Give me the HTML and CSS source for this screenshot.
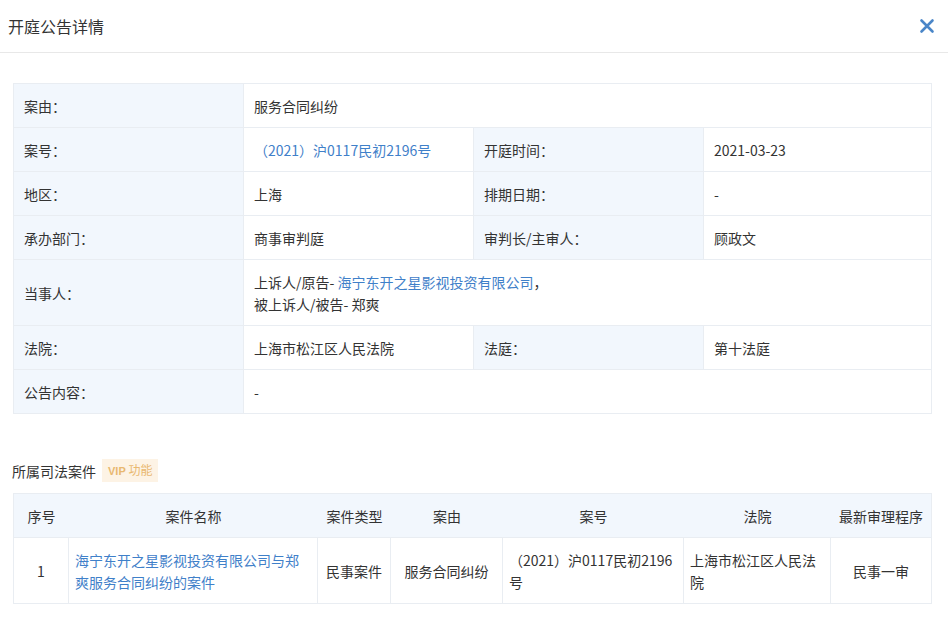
FILE: index.html
```html
<!DOCTYPE html>
<html lang="zh-CN">
<head>
<meta charset="utf-8">
<title>开庭公告详情</title>
<link rel="stylesheet" href="styles.css">
</head>
<body>
<div class="dialog">
  <div class="header">
    <div class="title">开庭公告详情</div>
    <svg class="close" width="16" height="16" viewBox="0 0 16 16"><path d="M2.5 2.5 L13.5 13.5 M13.5 2.5 L2.5 13.5" stroke="#4a86c8" stroke-width="2.6" stroke-linecap="round"/></svg>
  </div>
  <div class="content">
    <div class="detail">
      <div class="cell label">案由：</div>
      <div class="cell value span3">服务合同纠纷</div>

      <div class="cell label">案号：</div>
      <div class="cell value"><span class="link">（2021）沪0117民初2196号</span></div>
      <div class="cell label">开庭时间：</div>
      <div class="cell value">2021-03-23</div>

      <div class="cell label">地区：</div>
      <div class="cell value">上海</div>
      <div class="cell label">排期日期：</div>
      <div class="cell value">-</div>

      <div class="cell label">承办部门：</div>
      <div class="cell value">商事审判庭</div>
      <div class="cell label">审判长/主审人：</div>
      <div class="cell value">顾政文</div>

      <div class="cell label tall">当事人：</div>
      <div class="cell value span3 tall"><div>上诉人/原告- <span class="link">海宁东开之星影视投资有限公司</span>，</div><div>被上诉人/被告- 郑爽</div></div>

      <div class="cell label">法院：</div>
      <div class="cell value">上海市松江区人民法院</div>
      <div class="cell label">法庭：</div>
      <div class="cell value">第十法庭</div>

      <div class="cell label">公告内容：</div>
      <div class="cell value span3">-</div>
    </div>

    <div class="section-title">
      <span>所属司法案件</span>
      <span class="vip"><b>VIP</b> 功能</span>
    </div>

    <div class="cases">
      <div class="th">序号</div>
      <div class="th">案件名称</div>
      <div class="th">案件类型</div>
      <div class="th">案由</div>
      <div class="th">案号</div>
      <div class="th">法院</div>
      <div class="th">最新审理程序</div>

      <div class="td center">1</div>
      <div class="td left"><span class="link">海宁东开之星影视投资有限公司与郑爽服务合同纠纷的案件</span></div>
      <div class="td center">民事案件</div>
      <div class="td center">服务合同纠纷</div>
      <div class="td left">（2021）沪0117民初2196号</div>
      <div class="td left">上海市松江区人民法院</div>
      <div class="td center">民事一审</div>
    </div>
  </div>
</div>
</body>
</html>
```

FILE: styles.css
```css
* { box-sizing: border-box; }
html, body { margin: 0; padding: 0; background: #fff; }
body {
  font-family: "Noto Sans CJK SC", "Noto Sans", sans-serif;
  font-size: 14px;
  color: #333;
  width: 948px;
  height: 643px;
  overflow: hidden;
}
.header {
  height: 53px;
  border-bottom: 1px solid #e8e8e8;
  display: flex;
  align-items: center;
  justify-content: space-between;
  padding: 0 13px 0 8px;
}
.title {
  font-size: 16px;
  color: #333;
  line-height: 22px;
}
.close { display: block; }
.content {
  padding: 30px 16px 0 13px;
}
.detail {
  display: grid;
  grid-template-columns: 230px 230px 230px 1fr;
  border-top: 1px solid #e9edf2;
  border-left: 1px solid #e9edf2;
}
.cell {
  min-height: 44px;
  padding: 0 10px;
  display: flex;
  align-items: center;
  line-height: 22px;
  border-right: 1px solid #e9edf2;
  border-bottom: 1px solid #e9edf2;
}
.cell.tall {
  min-height: 66px;
  flex-direction: column;
  align-items: flex-start;
  justify-content: center;
}
.label { background: #f2f7fd; }
.value { background: #fff; }
.span3 { grid-column: span 3; }
.link { color: #3f80c9; }

.section-title {
  margin-top: 45px;
  display: flex;
  align-items: center;
  gap: 6px;
  margin-left: -1px;
  line-height: 22px;
}
.vip {
  background: #fdf3e5;
  color: #e9b870;
  font-size: 12px;
  padding: 0 6px;
  line-height: 21px;
}
.vip b { font-family: "Liberation Sans", sans-serif; font-weight: 700; font-size: 11px; }

.cases {
  margin-top: 11px;
  display: grid;
  grid-template-columns: 55px 249px 73px 112px 181px 147px 1fr;
  border-top: 1px solid #e9edf2;
  border-left: 1px solid #e9edf2;
}
.th {
  height: 44px;
  background: #f2f7fd;
  display: flex;
  align-items: center;
  justify-content: center;
  line-height: 22px;
  border-bottom: 1px solid #e9edf2;
  white-space: nowrap;
}
.th:nth-child(7) { border-right: 1px solid #e9edf2; }
.td {
  min-height: 66px;
  display: flex;
  align-items: center;
  line-height: 22px;
  border-right: 1px solid #e9edf2;
  border-bottom: 1px solid #e9edf2;
  padding: 0 6px;
}
.td.center { justify-content: center; text-align: center; }
.td.left { justify-content: flex-start; }
```
